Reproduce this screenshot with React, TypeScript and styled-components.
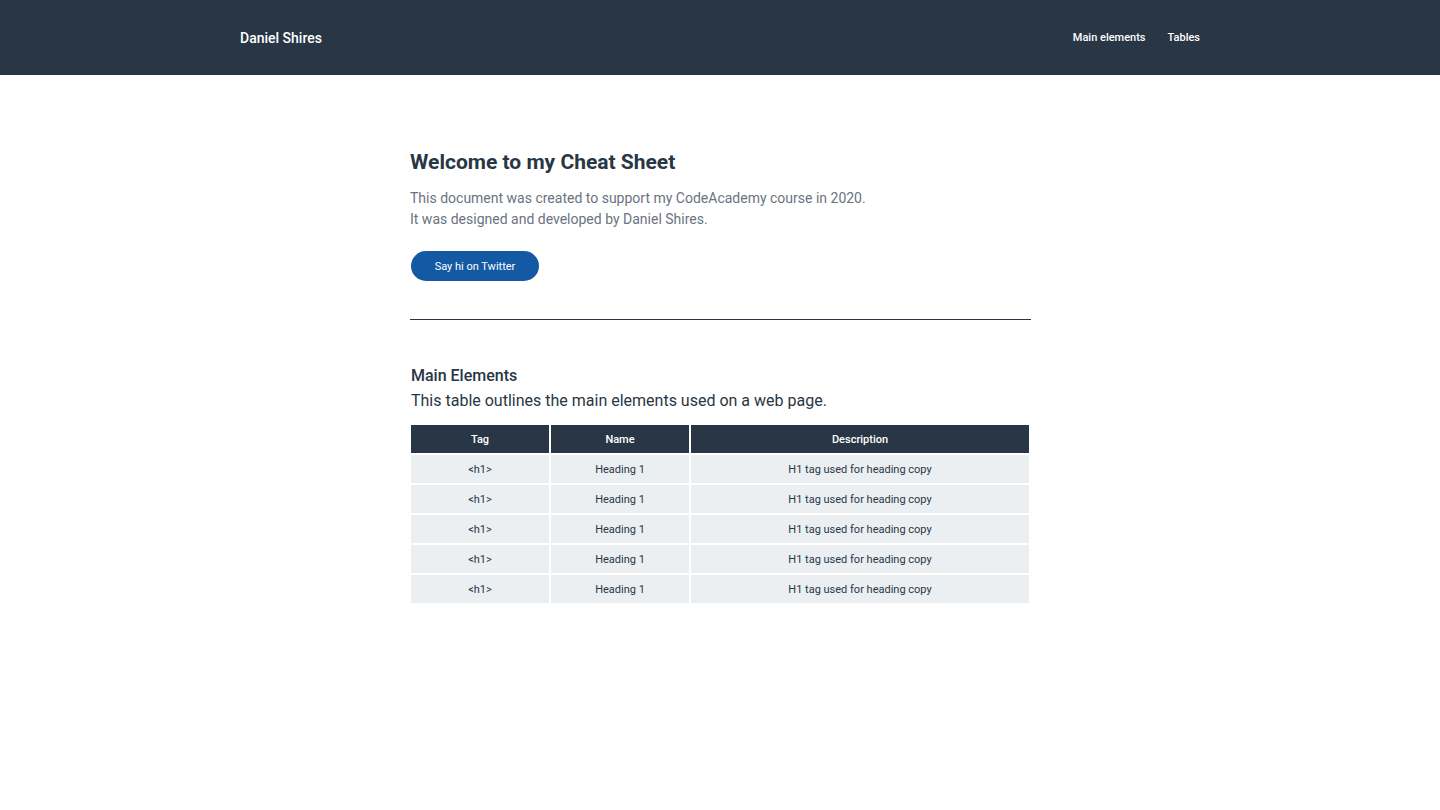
import React from "react";
import styled, { createGlobalStyle } from "styled-components";

const GlobalStyle = createGlobalStyle`
  html, body { margin: 0; padding: 0; background: #ffffff; }
  body { font-family: Roboto, "Liberation Sans", sans-serif; color: #283645; }
  * { box-sizing: border-box; }
`;

const TopBar = styled.header`
  background: #283645;
  height: 75px;
`;

const TopInner = styled.div`
  width: 960px;
  height: 100%;
  margin: 0 auto;
  display: flex;
  align-items: center;
  justify-content: space-between;
`;

const Brand = styled.div`
  color: #ffffff;
  font-size: 14px;
  font-weight: 500;
  padding-top: 1px;
`;

const Nav = styled.nav`
  display: flex;
  gap: 22px;
  margin-top: -1px;
`;

const NavLink = styled.a`
  color: #ffffff;
  font-size: 11px;
  font-weight: 500;
  text-decoration: none;
`;

const Main = styled.main`
  width: 620px;
  margin: 0 auto;
  padding-top: 75px;
`;

const Title = styled.h1`
  margin: 0;
  font-size: 21px;
  line-height: 24px;
  font-weight: 700;
  color: #283645;
`;

const Intro = styled.p`
  margin: 14px 0 0;
  font-size: 14px;
  line-height: 21px;
  color: #6b7380;
`;

const PillButton = styled.a`
  display: inline-flex;
  align-items: center;
  justify-content: center;
  margin: 21px 0 0 1px;
  width: 128px;
  height: 30px;
  border-radius: 15px;
  background: #1459a4;
  color: #ffffff;
  font-size: 11px;
  text-decoration: none;
`;

const Divider = styled.hr`
  margin: 38px 0 0;
  width: 621px;
  border: none;
  border-top: 1px solid #283645;
`;

const Section = styled.section`
  padding-top: 45px;
`;

const SectionTitle = styled.h2`
  margin: 0 0 0 1px;
  font-size: 16px;
  line-height: 21px;
  font-weight: 500;
`;

const SectionText = styled.p`
  margin: 4px 0 0 1px;
  font-size: 16px;
  line-height: 21px;
  font-weight: 400;
`;

const Table = styled.table`
  margin: 12px -1px 0;
  width: calc(100% + 2px);
  border-collapse: separate;
  border-spacing: 2px;
  table-layout: fixed;
`;

const HeadCell = styled.th<{ $w?: number }>`
  width: ${(p) => (p.$w ? `${p.$w}px` : "auto")};
  height: 28px;
  padding: 0;
  background: #283645;
  color: #ffffff;
  font-size: 11px;
  font-weight: 500;
  text-align: center;
`;

const Cell = styled.td`
  height: 28px;
  padding: 0;
  background: #ebeff2;
  color: #283645;
  font-size: 11px;
  text-align: center;
`;

const rows = Array.from({ length: 5 }, () => ({
  tag: "<h1>",
  name: "Heading 1",
  desc: "H1 tag used for heading copy",
}));

export default function App() {
  return (
    <>
      <GlobalStyle />
      <TopBar>
        <TopInner>
          <Brand>Daniel Shires</Brand>
          <Nav>
            <NavLink href="#main">Main elements</NavLink>
            <NavLink href="#tables">Tables</NavLink>
          </Nav>
        </TopInner>
      </TopBar>
      <Main>
        <Title>Welcome to my Cheat Sheet</Title>
        <Intro>
          This document was created to support my CodeAcademy course in 2020.
          <br />
          It was designed and developed by Daniel Shires.
        </Intro>
        <PillButton href="#twitter">Say hi on Twitter</PillButton>
        <Divider />
        <Section id="main">
          <SectionTitle>Main Elements</SectionTitle>
          <SectionText>This table outlines the main elements used on a web page.</SectionText>
          <Table>
            <thead>
              <tr>
                <HeadCell $w={138}>Tag</HeadCell>
                <HeadCell $w={138}>Name</HeadCell>
                <HeadCell>Description</HeadCell>
              </tr>
            </thead>
            <tbody>
              {rows.map((r, i) => (
                <tr key={i}>
                  <Cell>{r.tag}</Cell>
                  <Cell>{r.name}</Cell>
                  <Cell>{r.desc}</Cell>
                </tr>
              ))}
            </tbody>
          </Table>
        </Section>
      </Main>
    </>
  );
}
